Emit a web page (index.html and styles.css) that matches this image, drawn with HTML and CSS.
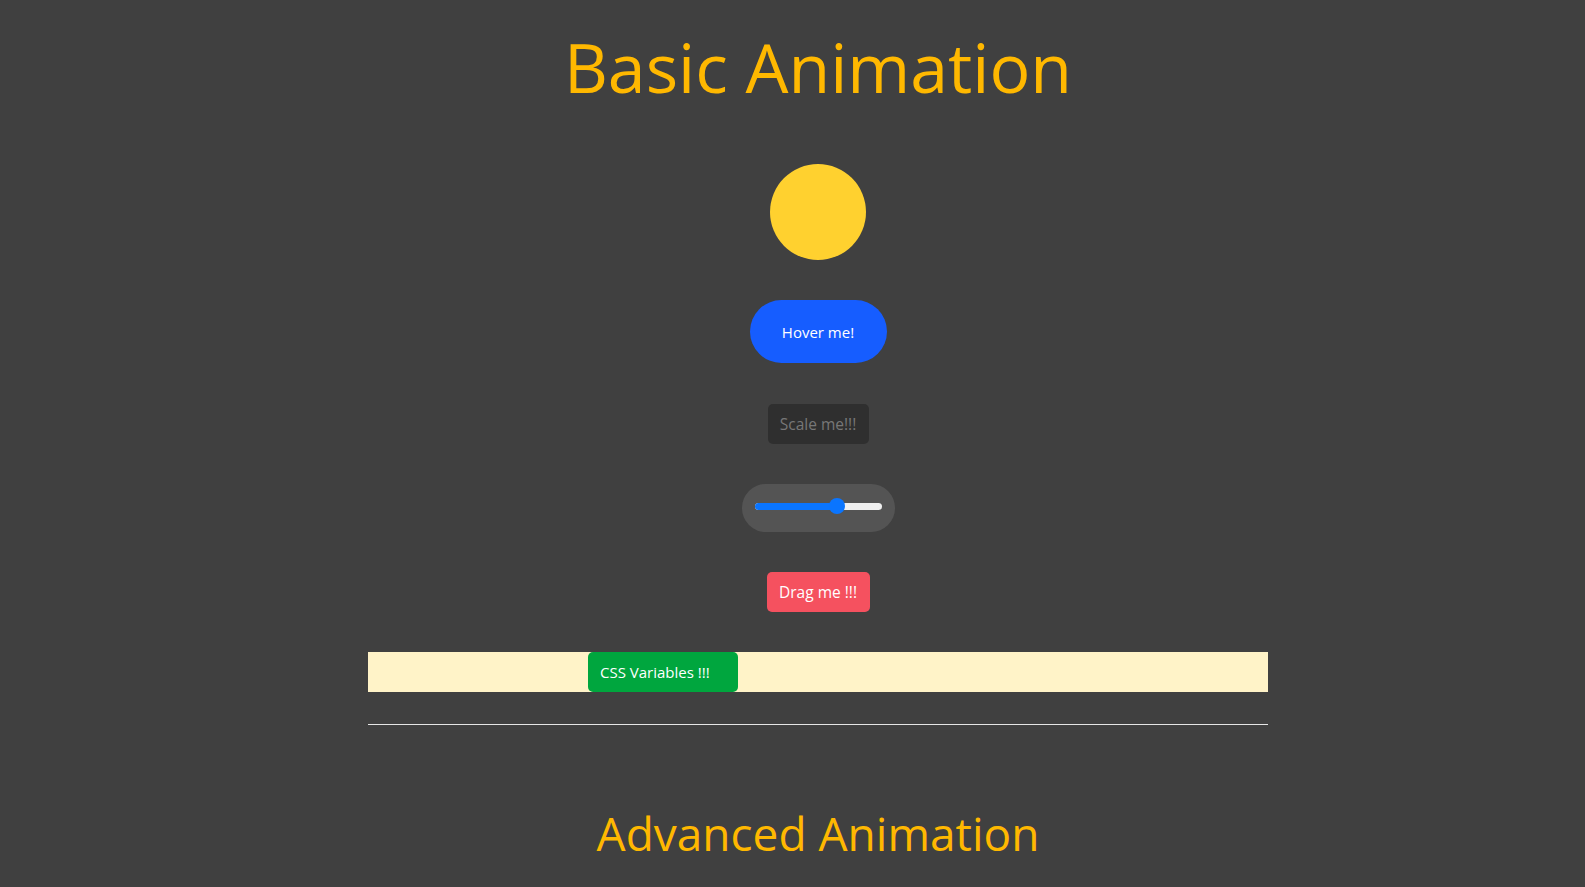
FILE: index.html
```html
<!DOCTYPE html>
<html lang="en">
<head>
<meta charset="utf-8">
<title>Basic Animation</title>
<link rel="stylesheet" href="styles.css">
</head>
<body>
<main class="page">
  <h1 class="title">Basic Animation</h1>
  <section class="demos">
    <div class="ball"></div>
    <button class="hover-btn">Hover me!</button>
    <button class="scale-btn">Scale me!!!</button>
    <div class="slider-pill">
      <div class="slider-track">
        <div class="slider-fill" style="width: 65%"></div>
        <div class="slider-thumb" style="left: 65%"></div>
      </div>
    </div>
    <button class="drag-btn">Drag me !!!</button>
    <div class="var-bar">
      <div class="var-box">CSS Variables !!!</div>
    </div>
  </section>
  <hr class="divider">
  <h2 class="subtitle">Advanced Animation</h2>
</main>
</body>
</html>
```
FILE: styles.css
```css
html, body {
  margin: 0;
  padding: 0;
  background: #404040;
}
body {
  padding-left: 51px;
  font-family: "Open Sans", "Noto Sans", sans-serif;
  overflow: hidden;
  height: 887px;
}
.page {
  width: 900px;
  margin: 0 auto;
  display: flex;
  flex-direction: column;
  align-items: center;
}
.title {
  margin: 19px 0 0;
  font-size: 68px;
  font-weight: 400;
  line-height: 96px;
  color: #ffb800;
}
.demos {
  width: 100%;
  margin-top: 49px;
  display: flex;
  flex-direction: column;
  align-items: center;
  gap: 40px;
}
.ball {
  width: 96px;
  height: 96px;
  border-radius: 50%;
  background: #ffd12f;
}
button {
  font-family: inherit;
  border: none;
  cursor: pointer;
}
.hover-btn {
  width: 137px;
  height: 63px;
  border-radius: 32px;
  background: #165dff;
  color: #fff;
  font-size: 15px;
}
.scale-btn {
  width: 101px;
  height: 40px;
  margin-top: 1px;
  border-radius: 5px;
  background: #2f2f2f;
  color: #777;
  font-size: 15.5px;
}
.slider-pill {
  width: 153px;
  height: 48px;
  border-radius: 24px;
  background: #545454;
  display: flex;
  align-items: center;
  justify-content: center;
}
.slider-track {
  position: relative;
  width: 127px;
  height: 7px;
  margin-bottom: 4px;
  border-radius: 4px;
  background: #efefef;
}
.slider-fill {
  height: 100%;
  border-radius: 4px 0 0 4px;
  background: #0a75ff;
}
.slider-thumb {
  position: absolute;
  top: 50%;
  width: 16px;
  height: 16px;
  margin: -8px 0 0 -8px;
  border-radius: 50%;
  background: #0a75ff;
}
.drag-btn {
  width: 103px;
  height: 40px;
  border-radius: 5px;
  background: #f5515f;
  color: #fff;
  font-size: 15.5px;
}
.var-bar {
  width: 100%;
  height: 40px;
  background: #fff3c8;
  display: flex;
}
.var-box {
  margin-left: 220px;
  width: 150px;
  box-sizing: border-box;
  padding-left: 12px;
  border-radius: 5px;
  background: #00a63e;
  color: #fff;
  font-size: 15px;
  display: flex;
  align-items: center;
}
.divider {
  width: 100%;
  margin: 32px 0 0;
  border: none;
  border-top: 1px solid #e6e6e6;
}
.subtitle {
  margin: 76px 0 0;
  font-size: 46px;
  font-weight: 400;
  line-height: 64px;
  color: #ffb800;
}
```
